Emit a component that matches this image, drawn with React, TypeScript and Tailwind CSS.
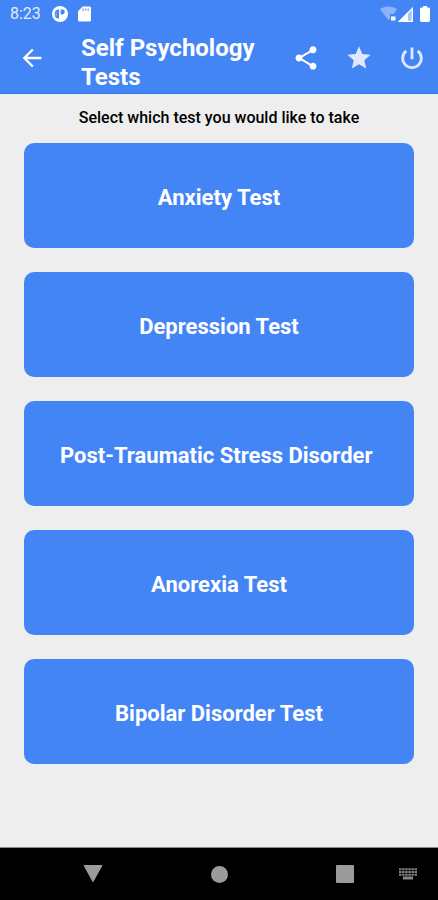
import type { ReactNode } from 'react';
import { MdArrowBack, MdShare, MdStar } from 'react-icons/md';

const tests = [
  'Anxiety Test',
  'Depression Test',
  'Post-Traumatic Stress Disorder\u00a0',
  'Anorexia Test',
  'Bipolar Disorder Test',
];

function StatusBar() {
  return (
    <div className="flex h-7 items-center justify-between pl-[10px] pr-2 text-[#e3ecfe]">
      <div className="flex items-center">
        <span className="text-base leading-7">8:23</span>
        <svg className="ml-[11px] size-4" viewBox="0 0 16 16">
          <circle cx="8" cy="8" r="8" fill="#fff" />
          <path d="M7 3.2v9.6A4.9 4.9 0 0 1 2.6 8 4.9 4.9 0 0 1 7 3.2z" fill="#4485f6" />
          <path d="M4.6 5.2a4 4 0 0 0 0 5.6z" fill="#8db4fa" />
          <path d="M8.6 3.6h1.8a2.4 2.4 0 0 1 0 4.8H8.6z" fill="#4485f6" />
        </svg>
        <svg className="ml-[10px] h-4 w-[13px]" viewBox="0 0 13 16">
          <path
            d="M4.6.5h6.9A1.5 1.5 0 0 1 13 2v12a1.5 1.5 0 0 1-1.5 1.5h-10A1.5 1.5 0 0 1 0 14V5.2z"
            fill="#fff"
          />
          <path d="M5 2.6v2.2M7.6 2.6v2.2M10.2 2.6v2.2" stroke="#79a8f9" strokeWidth="1.4" />
        </svg>
      </div>
      <div className="flex items-center">
        {/* Wifi without internet */}
        <svg className="h-4 w-[17px]" viewBox="0 0 17 16">
          <path d="M0 3.2C4.8-.4 12.2-.4 17 3.2L13.6 8H10v4.2L8.5 14z" fill="#8db4fa" />
          <path d="M11 10.5h4.5v4H11z" fill="#fff" />
        </svg>
        {/* Mobile signal */}
        <svg className="ml-px size-[15px]" viewBox="0 0 15 15">
          <path d="M15 0v15H0z" fill="#a9c7fb" />
          <path d="M10 5v10H0z" fill="#fff" />
          <path d="M14.4 1.4v13H1.4z" fill="none" stroke="#fff" strokeWidth="1.2" />
        </svg>
        {/* Battery */}
        <svg className="ml-[7px] h-4 w-[10px]" viewBox="0 0 10 16">
          <path
            d="M3 0h4v1.6h1.6A1.4 1.4 0 0 1 10 3v11.6A1.4 1.4 0 0 1 8.6 16H1.4A1.4 1.4 0 0 1 0 14.6V3a1.4 1.4 0 0 1 1.4-1.4H3z"
            fill="#fff"
          />
        </svg>
      </div>
    </div>
  );
}

function BarButton({ label, children }: { label: string; children: ReactNode }) {
  return (
    <button type="button" aria-label={label} className="flex h-[60px] w-[53px] items-center justify-center">
      {children}
    </button>
  );
}

function NavBar() {
  return (
    <nav className="flex h-[53px] items-center border-t border-[#8a8a8a] bg-black text-[#9b9b9b]">
      <div className="w-[30px]" />
      <button type="button" aria-label="Back" className="flex flex-1 justify-center">
        <svg className="h-[18px] w-5" viewBox="0 0 20 18">
          <path d="M1.4 0h17.2a.7.7 0 0 1 .6 1l-8.6 15.6a.7.7 0 0 1-1.2 0L.8 1a.7.7 0 0 1 .6-1z" fill="currentColor" />
        </svg>
      </button>
      <button type="button" aria-label="Home" className="flex flex-1 justify-center">
        <span className="size-[17px] rounded-full bg-current" />
      </button>
      <button type="button" aria-label="Recent apps" className="flex flex-1 justify-center">
        <span className="size-[18px] rounded-[1px] bg-current" />
      </button>
      <button type="button" aria-label="Switch keyboard" className="-ml-[30px] flex w-[60px] justify-center">
        <svg className="h-3 w-[18px]" viewBox="0 0 18 12">
          <path d="M0 1.3h18M0 4h18M0 6.7h18" stroke="#858585" strokeWidth="2" strokeDasharray="2.4 .72" />
          <path d="M4 8.5h10v3H4z" fill="#858585" />
        </svg>
      </button>
    </nav>
  );
}

export default function App() {
  return (
    <div className="flex min-h-screen flex-col bg-[#eeeeee] font-['Roboto',sans-serif]">
      <header className="border-b border-[#2f78e8] bg-[#4485f6] text-white">
        <StatusBar />
        <div className="flex h-[65px] items-start">
          <div className="flex w-[81px] pl-[5px]">
            <BarButton label="Go back">
              <MdArrowBack className="size-7" />
            </BarButton>
          </div>
          <h1 className="min-w-0 flex-1 pt-[6px] text-2xl leading-[29px] font-bold">Self Psychology Tests</h1>
          <div className="flex">
            <BarButton label="Share">
              <MdShare className="size-7" />
            </BarButton>
            <BarButton label="Rate">
              <MdStar className="size-7 text-[#dfe9fe]" />
            </BarButton>
            <BarButton label="Exit">
              <svg className="size-7" viewBox="0 0 24 24" fill="none" stroke="#dfe9fe" strokeWidth="2.4">
                <path d="M12 3v10M7.1 5.9a8 8 0 1 0 9.8 0" />
              </svg>
            </BarButton>
          </div>
        </div>
      </header>

      <main className="flex-1 px-6 pt-3 pb-6">
        <p className="text-center text-base leading-6 font-medium text-black">
          Select which test you would like to take
        </p>
        <div className="mt-[13px] flex flex-col gap-6">
          {tests.map((test) => (
            <button
              key={test}
              type="button"
              className="h-[105px] rounded-[10px] bg-[#4485f6] pt-[3px] text-[22px] font-bold text-white"
            >
              {test}
            </button>
          ))}
        </div>
      </main>

      <NavBar />
    </div>
  );
}
